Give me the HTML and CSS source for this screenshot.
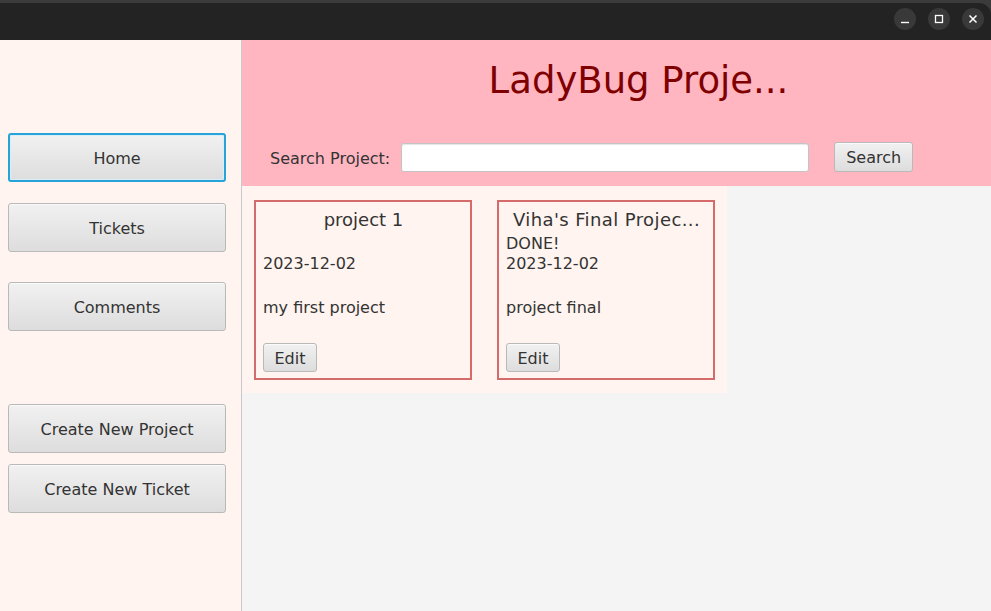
FILE: index.html
```html
<!DOCTYPE html>
<html>
<head>
<meta charset="utf-8">
<link rel="stylesheet" href="styles.css">
</head>
<body>
<div class="window">
  <div class="chrome">
    <div class="titlebar">
      <div class="controls">
        <span class="ctl"><svg width="10" height="10" viewBox="0 0 10 10"><path d="M1 8.5h8" stroke="#fff" stroke-width="1.4"/></svg></span>
        <span class="ctl"><svg width="10" height="10" viewBox="0 0 10 10"><rect x="1.5" y="1.5" width="7" height="7" fill="none" stroke="#fff" stroke-width="1.3"/></svg></span>
        <span class="ctl"><svg width="10" height="10" viewBox="0 0 10 10"><path d="M1.5 1.5l7 7M8.5 1.5l-7 7" stroke="#fff" stroke-width="1.5"/></svg></span>
      </div>
    </div>
  </div>
  <div class="app">
    <aside class="sidebar">
      <button class="btn side focused">Home</button>
      <button class="btn side gap1">Tickets</button>
      <button class="btn side gap2">Comments</button>
      <button class="btn side gap3">Create New Project</button>
      <button class="btn side gap4">Create New Ticket</button>
    </aside>
    <main class="main">
      <header class="header">
        <h1 class="title">LadyBug Proje...</h1>
        <div class="search">
          <span class="label">Search Project:</span>
          <input class="field" type="text">
          <button class="btn searchbtn">Search</button>
        </div>
      </header>
      <div class="cards">
        <div class="card">
          <div class="ctitle">project 1</div>
          <div class="line"></div>
          <div class="line">2023-12-02</div>
          <div class="line desc">my first project</div>
          <button class="btn edit">Edit</button>
        </div>
        <div class="card">
          <div class="ctitle wide">Viha's Final Projec...</div>
          <div class="line">DONE!</div>
          <div class="line">2023-12-02</div>
          <div class="line desc">project final</div>
          <button class="btn edit">Edit</button>
        </div>
      </div>
    </main>
  </div>
</div>
</body>
</html>
```
FILE: styles.css
```css
html, body {
  margin: 0;
  padding: 0;
}
body {
  width: 991px;
  height: 611px;
  overflow: hidden;
  font-family: "DejaVu Sans", "Liberation Sans", sans-serif;
  color: #333333;
}
.window {
  display: flex;
  flex-direction: column;
  height: 611px;
}
.chrome {
  background: #3b3b3b;
  padding-top: 3px;
}
.titlebar {
  height: 37px;
  background: #232323;
  border-top-right-radius: 12px;
  display: flex;
  justify-content: flex-end;
  align-items: center;
}
.controls {
  display: flex;
  gap: 12px;
  padding-right: 7px;
  margin-top: -6px;
}
.ctl {
  width: 22px;
  height: 22px;
  border-radius: 50%;
  background: #393939;
  display: flex;
  align-items: center;
  justify-content: center;
}
.app {
  flex: 1;
  display: flex;
}
.sidebar {
  width: 242px;
  border-right: 1px solid #c9c9c9;
  background: #fff4ef;
  display: flex;
  flex-direction: column;
  padding: 93px 0 0 8px;
  box-sizing: border-box;
  flex-shrink: 0;
}
.btn {
  font-family: "DejaVu Sans", "Liberation Sans", sans-serif;
  font-size: 16px;
  color: #333333;
  background: linear-gradient(#f1f1f1, #dddddd);
  border: 1px solid #b9b9b9;
  border-radius: 3px;
  padding: 0;
  box-shadow: inset 0 1px 0 #fafafa;
}
.side {
  width: 218px;
  height: 49px;
  padding-top: 1px;
}
.focused {
  border: 2px solid #28a3d9;
  box-shadow: inset 0 0 0 1px #d8eef8;
}
.gap1 { margin-top: 21px; }
.gap2 { margin-top: 30px; }
.gap3 { margin-top: 73px; }
.gap4 { margin-top: 11px; }
.main {
  flex: 1;
  background: #f4f4f4;
  display: flex;
  flex-direction: column;
  align-items: flex-start;
}
.header {
  align-self: stretch;
  height: 146px;
  background: #ffb6c1;
  display: flex;
  flex-direction: column;
  box-sizing: border-box;
  padding-top: 18px;
}
.title {
  margin: 0;
  font-weight: normal;
  font-size: 37px;
  line-height: 46px;
  color: #7f0000;
  text-align: center;
  padding-left: 44px;
}
.search {
  display: flex;
  align-items: center;
  margin-top: 38px;
  padding-left: 28px;
}
.label {
  font-size: 16px;
  color: #333333;
  padding-top: 2px;
}
.field {
  margin-left: 11px;
  width: 408px;
  height: 29px;
  box-sizing: border-box;
  border: 1px solid #c4c4c4;
  border-radius: 3px;
  background: #ffffff;
  box-shadow: inset 0 1px 1px #e6e6e6;
  padding: 0;
}
.searchbtn {
  margin-left: 25px;
  width: 79px;
  height: 30px;
  padding-top: 1px;
}
.cards {
  display: flex;
  gap: 25px;
  padding: 14px 12px 13px 12px;
  background: #fff4ef;
}
.card {
  width: 218px;
  height: 180px;
  box-sizing: border-box;
  border: 2px solid #d56a6a;
  background: #fff4ef;
  padding: 6px 6px 0 7px;
  display: flex;
  flex-direction: column;
  align-items: flex-start;
  font-size: 16px;
}
.ctitle {
  align-self: stretch;
  text-align: center;
  font-size: 18px;
  line-height: 24px;
  height: 25px;
  white-space: nowrap;
}
.wide {
  letter-spacing: 0.4px;
}
.line {
  height: 20px;
  line-height: 22px;
}
.desc {
  margin-top: 24px;
}
.edit {
  margin-top: 26px;
  width: 54px;
  height: 29px;
  padding-top: 1px;
}
```
